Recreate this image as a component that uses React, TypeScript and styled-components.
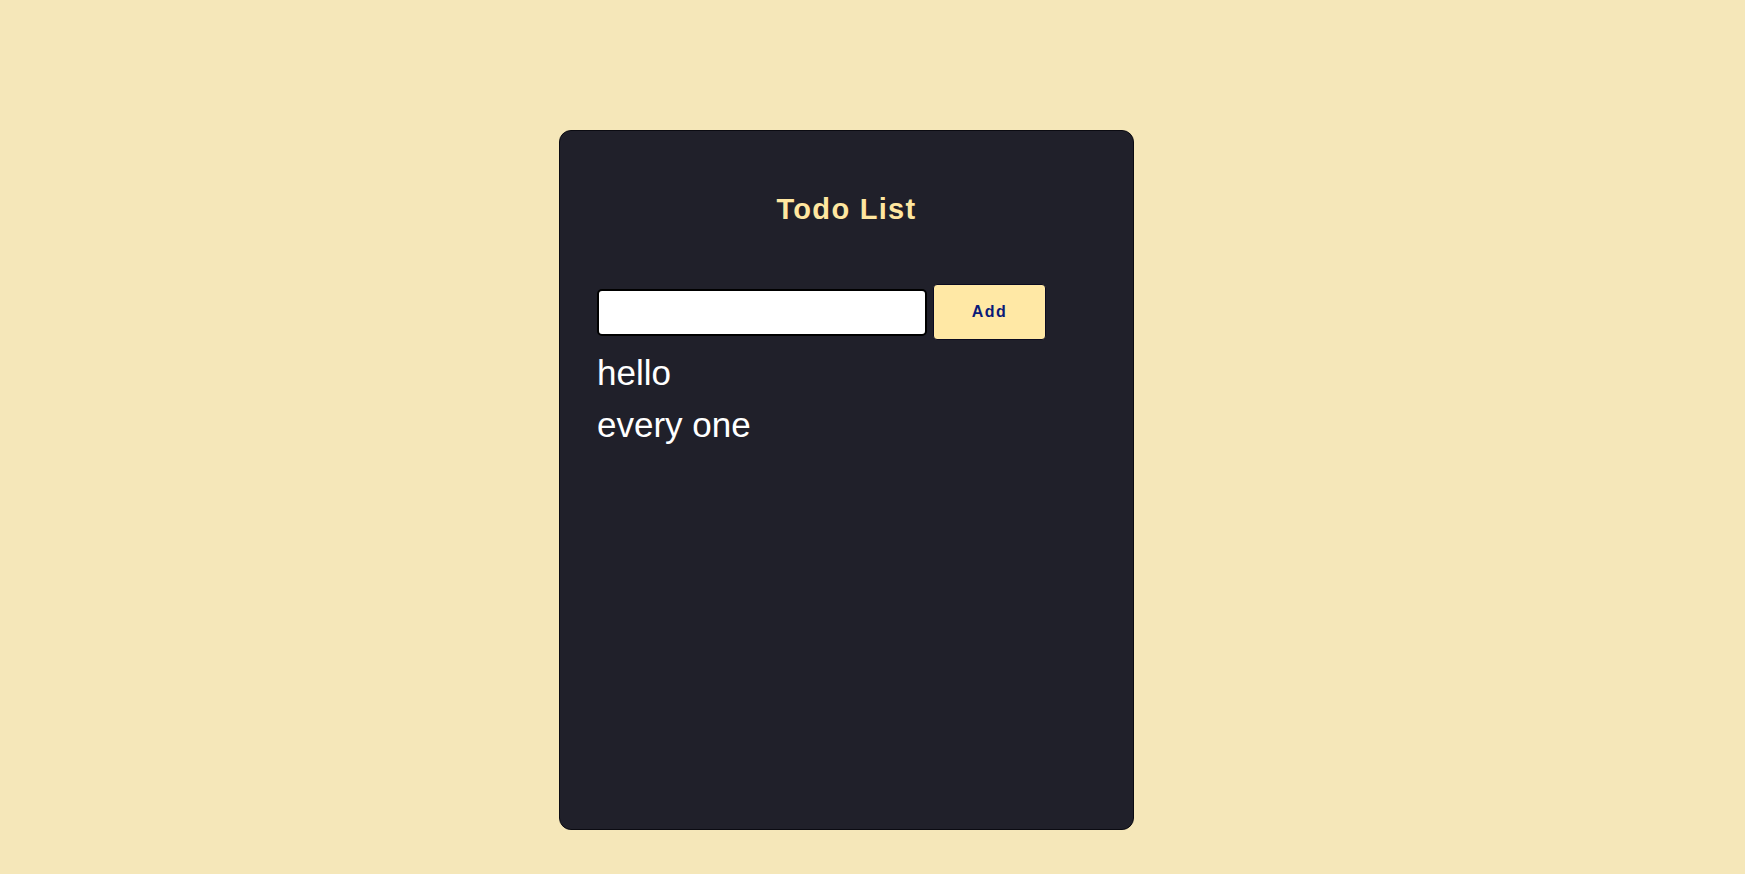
import React, { useState } from "react";
import styled, { createGlobalStyle } from "styled-components";

const GlobalStyle = createGlobalStyle`
  html, body {
    margin: 0;
    padding: 0;
    background: #f5e7b9;
    font-family: "Liberation Sans", Arial, sans-serif;
  }
`;

const Page = styled.div`
  min-height: 874px;
  padding-top: 130px;
  padding-left: 559px;
  box-sizing: border-box;
`;

const Card = styled.div`
  width: 575px;
  height: 700px;
  box-sizing: border-box;
  background: #20202a;
  border: 1px solid #0b0b12;
  border-radius: 12px;
  padding: 62px 37px 0 37px;
  display: flex;
  flex-direction: column;
`;

const Title = styled.h1`
  margin: 0;
  text-align: center;
  font-size: 29px;
  line-height: 32px;
  font-weight: 700;
  letter-spacing: 1.3px;
  color: #ffe7a0;
`;

const Row = styled.div`
  margin-top: 59px;
  display: flex;
  align-items: center;
  gap: 6px;
`;

const Input = styled.input`
  width: 330px;
  height: 47px;
  box-sizing: border-box;
  border: 2px solid #000;
  border-radius: 5px;
  background: #fff;
  font-size: 18px;
  padding: 0 8px;
  outline: none;
`;

const Button = styled.button`
  width: 113px;
  height: 56px;
  box-sizing: border-box;
  border: 1px solid #0b0b20;
  border-radius: 4px;
  background: #ffe8a5;
  color: #0a1a78;
  font-family: "Liberation Sans", Arial, sans-serif;
  font-size: 16px;
  font-weight: 700;
  letter-spacing: 1.5px;
  cursor: pointer;
`;

const List = styled.ul`
  list-style: none;
  margin: 7px 0 0 0;
  padding: 0;
`;

const Item = styled.li`
  color: #ffffff;
  font-size: 35px;
  line-height: 52px;
`;

export default function App() {
  const [text, setText] = useState("");
  const [items, setItems] = useState<string[]>(["hello", "every one"]);
  const add = () => {
    if (text.trim()) {
      setItems([...items, text.trim()]);
      setText("");
    }
  };
  return (
    <>
      <GlobalStyle />
      <Page>
        <Card>
          <Title>Todo List</Title>
          <Row>
            <Input value={text} onChange={(e) => setText(e.target.value)} />
            <Button onClick={add}>Add</Button>
          </Row>
          <List>
            {items.map((it, i) => (
              <Item key={i}>{it}</Item>
            ))}
          </List>
        </Card>
      </Page>
    </>
  );
}
